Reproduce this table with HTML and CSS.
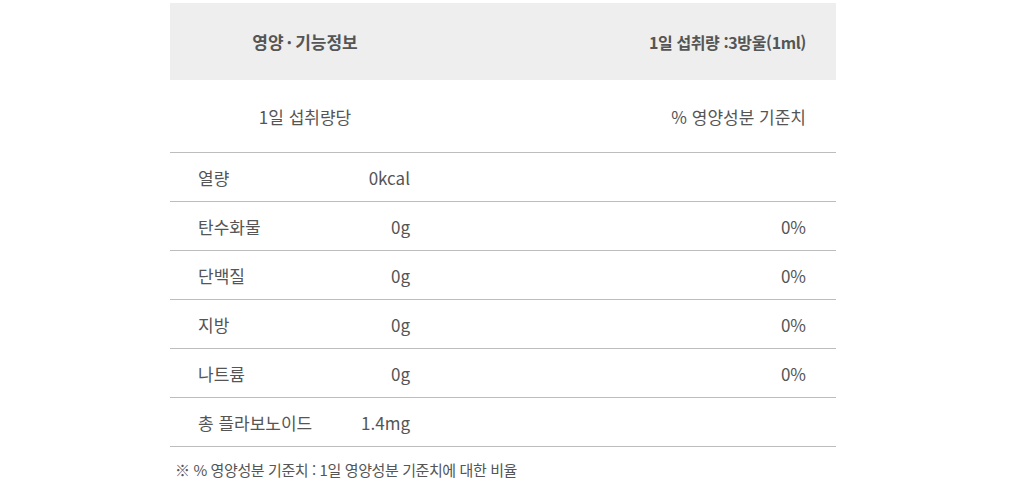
FILE: index.html
```html
<!DOCTYPE html>
<html lang="ko">
<head>
<meta charset="utf-8">
<link rel="stylesheet" href="styles.css">
</head>
<body>
<div class="wrap">
  <table class="nutri">
    <colgroup>
      <col class="c-label">
      <col class="c-value">
      <col class="c-pct">
    </colgroup>
    <thead>
      <tr class="head">
        <th colspan="2" class="center">영양<span class="dot">·</span>기능정보</th>
        <th class="right serving">1일 섭취량 :3방울(1ml)</th>
      </tr>
      <tr class="sub">
        <td colspan="2" class="center">1일 섭취량당</td>
        <td class="right">% 영양성분 기준치</td>
      </tr>
    </thead>
    <tbody>
      <tr><td class="label">열량</td><td class="value">0kcal</td><td class="right"></td></tr>
      <tr><td class="label">탄수화물</td><td class="value">0g</td><td class="right">0%</td></tr>
      <tr><td class="label">단백질</td><td class="value">0g</td><td class="right">0%</td></tr>
      <tr><td class="label">지방</td><td class="value">0g</td><td class="right">0%</td></tr>
      <tr><td class="label">나트륨</td><td class="value">0g</td><td class="right">0%</td></tr>
      <tr><td class="label">총 플라보노이드</td><td class="value">1.4mg</td><td class="right"></td></tr>
    </tbody>
  </table>
  <p class="note">※ % 영양성분 기준치 : 1일 영양성분 기준치에 대한 비율</p>
</div>
</body>
</html>
```
FILE: styles.css
```css
html, body {
  margin: 0;
  padding: 0;
  background: #fff;
}
body {
  font-family: "Noto Sans CJK KR", "Noto Sans", sans-serif;
  color: #555;
}
.wrap {
  padding: 3px 0 0 170px;
}
.nutri {
  width: 666px;
  border-collapse: collapse;
  table-layout: fixed;
}
.c-label { width: 160px; }
.c-value { width: 110px; }
.c-pct { width: 396px; }
.nutri th, .nutri td {
  padding: 0;
  font-size: 17px;
  font-weight: 400;
  vertical-align: middle;
}
.head th {
  background: #eeeeee;
  height: 77px;
  font-size: 17px;
  font-weight: 700;
  color: #555;
}
.head .dot {
  margin: 0 3px;
}
.head .serving {
  font-size: 16px;
  letter-spacing: -0.4px;
}
.sub td {
  height: 72px;
  border-bottom: 1px solid #bdbdbd;
}
.center { text-align: center; }
.right { text-align: right; padding-right: 30px !important; }
.label { padding-left: 28px !important; text-align: left; }
.value { text-align: right; padding-right: 30px !important; }
tbody td {
  height: 48px;
  border-bottom: 1px solid #bdbdbd;
}
.note {
  margin: 12px 0 0 5px;
  font-size: 15px;
  color: #555;
  letter-spacing: -0.4px;
}
```
